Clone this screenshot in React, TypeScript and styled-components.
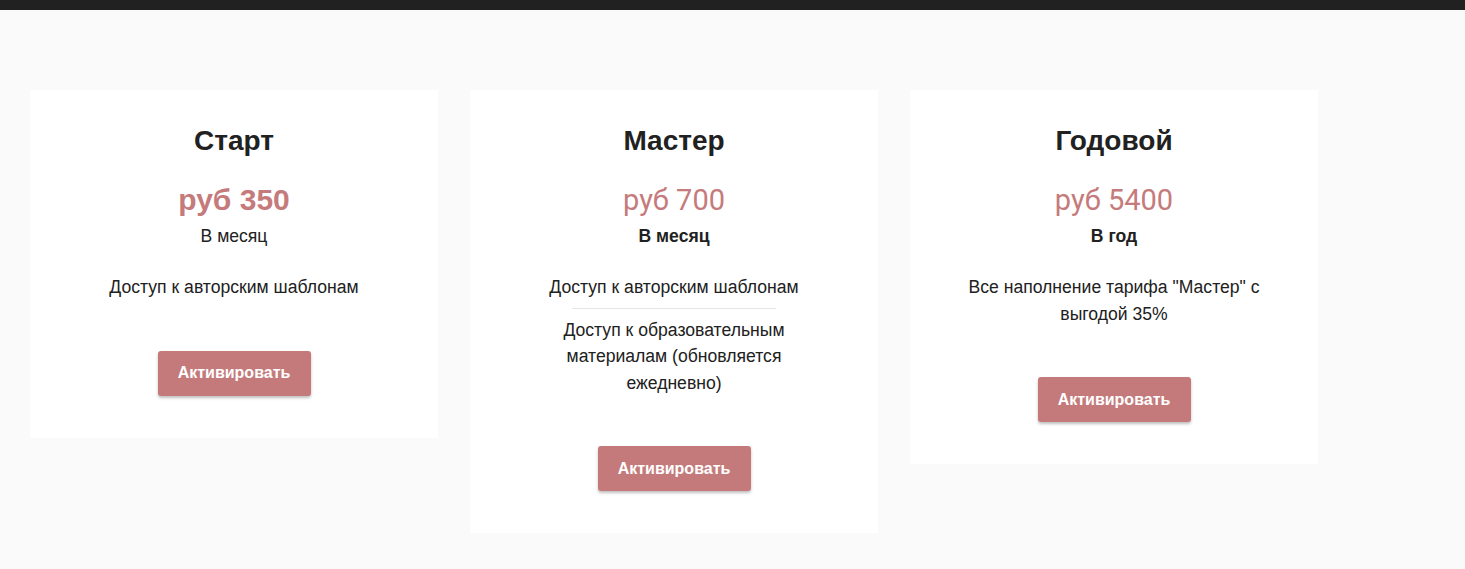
import React from "react";
import styled, { createGlobalStyle } from "styled-components";

const Global = createGlobalStyle`
  html, body { margin: 0; padding: 0; background: #fafafa; }
  body { font-family: "Liberation Sans", Arial, sans-serif; color: #212121; }
`;

const TopBar = styled.div`
  height: 10px;
  background: #212121;
`;

const Page = styled.main`
  display: flex;
  align-items: flex-start;
  gap: 32px;
  padding: 80px 30px 36px;
`;

const Card = styled.section`
  width: 408px;
  background: #ffffff;
  display: flex;
  flex-direction: column;
  align-items: center;
  text-align: center;
  padding: 34px 0 42px;
  box-sizing: border-box;
`;

const Title = styled.h2`
  margin: 0;
  font-size: 28px;
  line-height: 34px;
  font-weight: 700;
  color: #212121;
`;

const Price = styled.div<{ $bold?: boolean }>`
  margin-top: 25px;
  font-family: ${(p) => (p.$bold ? '"Liberation Sans", Arial' : "Roboto")}, sans-serif;
  font-size: ${(p) => (p.$bold ? 30 : 29)}px;
  line-height: 34px;
  font-weight: ${(p) => (p.$bold ? 700 : 400)};
  color: #c57b7b;
`;

const Period = styled.div<{ $bold?: boolean }>`
  margin-top: 8px;
  font-size: 17.6px;
  line-height: 22px;
  font-weight: ${(p) => (p.$bold ? 700 : 400)};
  color: #212121;
`;

const Features = styled.div`
  margin-top: 27px;
  width: 100%;
  display: flex;
  flex-direction: column;
  align-items: center;
`;

const Feature = styled.p`
  margin: 0;
  width: 300px;
  font-size: 17.6px;
  line-height: 26.5px;
  color: #212121;
`;

const Divider = styled.hr`
  width: 50%;
  margin: 7px 0 8px;
  border: 0;
  border-top: 1px solid #e6e6e6;
`;

const Button = styled.button`
  margin-top: 50px;
  width: 153px;
  height: 45px;
  border: 0;
  border-radius: 3px;
  background: #c47a7a;
  color: #ffffff;
  font-family: "Liberation Sans", Arial, sans-serif;
  font-size: 16px;
  font-weight: 700;
  box-shadow: 0 2px 3px rgba(0, 0, 0, 0.25);
  cursor: pointer;
`;

type Plan = {
  title: string;
  price: string;
  boldPrice?: boolean;
  period: string;
  boldPeriod?: boolean;
  features: string[];
};

const plans: Plan[] = [
  {
    title: "Старт",
    price: "руб 350",
    boldPrice: true,
    period: "В месяц",
    features: ["Доступ к авторским шаблонам"],
  },
  {
    title: "Мастер",
    price: "руб 700",
    period: "В месяц",
    boldPeriod: true,
    features: [
      "Доступ к авторским шаблонам",
      "Доступ к образовательным материалам (обновляется ежедневно)",
    ],
  },
  {
    title: "Годовой",
    price: "руб 5400",
    period: "В год",
    boldPeriod: true,
    features: ['Все наполнение тарифа "Мастер" с выгодой 35%'],
  },
];

export default function App() {
  return (
    <>
      <Global />
      <TopBar />
      <Page>
        {plans.map((p) => (
          <Card key={p.title}>
            <Title>{p.title}</Title>
            <Price $bold={p.boldPrice}>{p.price}</Price>
            <Period $bold={p.boldPeriod}>{p.period}</Period>
            <Features>
              {p.features.map((f, i) => (
                <React.Fragment key={f}>
                  {i > 0 && <Divider />}
                  <Feature>{f}</Feature>
                </React.Fragment>
              ))}
            </Features>
            <Button>Активировать</Button>
          </Card>
        ))}
      </Page>
    </>
  );
}
